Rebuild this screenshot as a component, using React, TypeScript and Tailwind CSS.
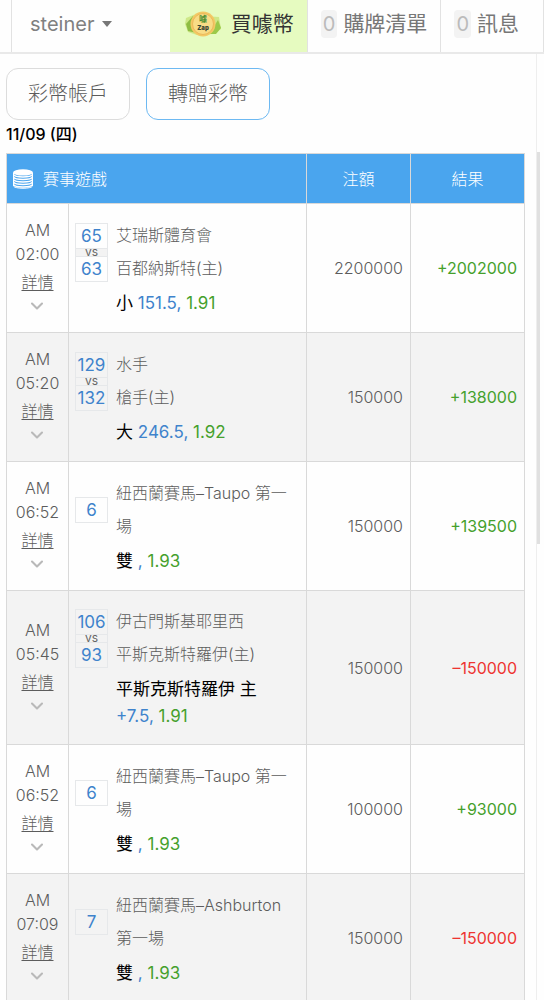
import { ChevronDown } from "lucide-react";

type Bet = {
  time: string;
  scores: string[];
  teams: string[];
  pick: string;
  line?: string;
  odds: string;
  stake: string;
  result: string;
};

const bets: Bet[] = [
  { time: "02:00", scores: ["65", "63"], teams: ["艾瑞斯體育會", "百都納斯特(主)"], pick: "小", line: "151.5", odds: "1.91", stake: "2200000", result: "+2002000" },
  { time: "05:20", scores: ["129", "132"], teams: ["水手", "槍手(主)"], pick: "大", line: "246.5", odds: "1.92", stake: "150000", result: "+138000" },
  { time: "06:52", scores: ["6"], teams: ["紐西蘭賽馬–Taupo 第一場"], pick: "雙", odds: "1.93", stake: "150000", result: "+139500" },
  { time: "05:45", scores: ["106", "93"], teams: ["伊古門斯基耶里西", "平斯克斯特羅伊(主)"], pick: "平斯克斯特羅伊 主", line: "+7.5", odds: "1.91", stake: "150000", result: "–150000" },
  { time: "06:52", scores: ["6"], teams: ["紐西蘭賽馬–Taupo 第一場"], pick: "雙", odds: "1.93", stake: "100000", result: "+93000" },
  { time: "07:09", scores: ["7"], teams: ["紐西蘭賽馬–Ashburton 第一場"], pick: "雙", odds: "1.93", stake: "150000", result: "–150000" },
];

function CoinLogo() {
  return (
    <svg viewBox="0 0 40 30" className="h-[30px] w-10 shrink-0" aria-hidden="true">
      <path d="M3 9 L13 5 L20 7 L36 8 L38 20 L30 25 L14 26 L5 23 L2 15Z" fill="#c3e070" opacity=".7" />
      <path d="M3 15 L10 7 L14 24 L5 22Z" fill="#8ebd42" />
      <path d="M26 25 L35 11 L38 19 L33 25Z" fill="#9cc94a" />
      <circle cx="20" cy="15" r="12.5" fill="#f3c864" />
      <circle cx="20" cy="15" r="10.5" fill="#f8dc86" stroke="#ecb85a" strokeWidth="1" />
      <text x="20" y="13" textAnchor="middle" fontSize="8" fontWeight="700" fill="#4f8f32" fontFamily="Noto Sans CJK TC">噱</text>
      <text x="20" y="21" textAnchor="middle" fontSize="6" fontWeight="900" fill="#3c4a35" fontFamily="Inter">Zap</text>
    </svg>
  );
}

function CoinStack() {
  return (
    <svg viewBox="0 0 20 20" className="h-5 w-5" fill="#fff" aria-hidden="true">
      <ellipse cx="10" cy="3.4" rx="10" ry="3.2" />
      <g fill="none" stroke="#fff" strokeWidth="1.5">
        <path d="M.5 5.5c1 3.2 18 3.2 19 0" />
        <path d="M.5 8c1 3.2 18 3.2 19 0" />
        <path d="M.5 10.5c1 3.2 18 3.2 19 0" />
        <path d="M.5 13c1 3.2 18 3.2 19 0" />
        <path d="M.5 15.5c1 3.2 18 3.2 19 0" />
        <path d="M.5 4v13c1 3 18 3 19 0V4" strokeWidth="1" />
      </g>
    </svg>
  );
}

function Scores({ scores }: { scores: string[] }) {
  return (
    <div className="w-[33px] shrink-0 border border-[#e6e8ea] text-center text-[17px] font-normal text-[#3f83cc]">
      <div className="leading-6">{scores[0]}</div>
      {scores.length > 1 && (
        <>
          <div className="h-[9px] border-y border-[#e6e8ea] bg-[#f3f3f3] text-xs leading-[6px] text-[#666]">vs</div>
          <div className="leading-6">{scores[1]}</div>
        </>
      )}
    </div>
  );
}

function BetRow({ bet }: { bet: Bet }) {
  const win = bet.result.startsWith("+");
  return (
    <tr className="h-[129px] even:bg-[#f3f3f3]">
      <td className="border border-[#d9d9d9] text-center leading-6">
        <div>AM</div>
        <div>{bet.time}</div>
        <button type="button" className="mx-auto mt-1 flex flex-col items-center">
          <span className="underline underline-offset-2">詳情</span>
          <span className="flex h-6 items-center text-[#b9b9b9]">
            <ChevronDown size={20} strokeWidth={2.5} />
          </span>
        </button>
      </td>
      <td className="border border-[#d9d9d9] px-1.5 py-[14px]">
        <div className="flex items-center gap-2">
          <Scores scores={bet.scores} />
          <div className="min-w-0 flex-1 leading-[33px]">
            {bet.teams.map((team) => (
              <div key={team}>{team}</div>
            ))}
          </div>
        </div>
        <div className="mt-[5px] pl-[41px] text-[17px] leading-[27px] font-normal">
          <span className="text-black">{bet.pick}</span>{" "}
          <span className="whitespace-nowrap">
            <span className="text-[#3f83cc]">{bet.line},</span>{" "}
            <span className="text-[#45a02c]">{bet.odds}</span>
          </span>
        </div>
      </td>
      <td className="border border-[#d9d9d9] px-[7px] text-right">{bet.stake}</td>
      <td className={win ? "border border-[#d9d9d9] px-[7px] text-right font-normal text-[#45a02c]" : "border border-[#d9d9d9] px-[7px] text-right font-normal text-[#ee3430]"}>
        {bet.result}
      </td>
    </tr>
  );
}

export default function App() {
  return (
    <div className="flex h-screen flex-col overflow-hidden bg-[#fefefe] font-['Inter','Noto_Sans_CJK_TC',sans-serif] font-light text-[#5c5c5c]">
      <header className="flex h-[54px] shrink-0 border-b-2 border-[#e9e9e9] pl-[11px] text-[21px] font-normal text-[#777]">
        <button type="button" className="flex flex-1 items-center gap-2 border-l border-[#e2e2e2] pb-1 pl-[18px] text-xl text-[#808080]">
          steiner
          <svg viewBox="0 0 10 6" className="h-1.5 w-2.5" fill="#777" aria-hidden="true">
            <path d="M0 0h10L5 6z" />
          </svg>
        </button>
        <a href="#buy" className="flex items-center gap-2 bg-[#e6fbc0] px-[13px] pb-1 text-[#333]">
          <CoinLogo />
          買噱幣
        </a>
        <a href="#cards" className="flex items-center gap-1.5 border-l border-[#e2e2e2] px-[13px] pb-1">
          <span className="rounded-sm bg-[#f3f3f3] px-0.5 text-xl leading-7 text-[#bbb]">0</span>
          購牌清單
        </a>
        <a href="#messages" className="flex items-center gap-1.5 border-x border-[#e2e2e2] pr-6 pb-1 pl-[13px]">
          <span className="rounded-sm bg-[#f3f3f3] px-0.5 text-xl leading-7 text-[#bbb]">0</span>
          訊息
        </a>
      </header>

      <div className="flex min-h-0 flex-1">
        <main className="min-w-0 flex-1 overflow-hidden pt-[14px] pr-[11px] pl-1.5">
          <nav className="flex gap-4 text-xl">
            <button type="button" className="h-[52px] rounded-xl border border-[#dcdcdc] px-[21px]">彩幣帳戶</button>
            <button type="button" className="h-[52px] rounded-xl border border-[#6db9f2] px-[21px]">轉贈彩幣</button>
          </nav>
          <h2 className="mt-0.5 text-base leading-6 font-medium text-black">11/09 (四)</h2>

          <table className="mt-[7px] w-full table-fixed border-collapse text-base">
            <colgroup>
              <col className="w-[62px]" />
              <col />
              <col className="w-[104px]" />
              <col className="w-[114px]" />
            </colgroup>
            <thead>
              <tr className="h-[50px] bg-[#4aa5ee] text-white">
                <th colSpan={2} className="border border-[#d9d9d9] px-1.5 text-left font-light">
                  <span className="flex items-center gap-2.5">
                    <CoinStack />
                    賽事遊戲
                  </span>
                </th>
                <th className="border border-[#d9d9d9] font-light">注額</th>
                <th className="border border-[#d9d9d9] font-light">結果</th>
              </tr>
            </thead>
            <tbody>
              {bets.map((bet, i) => (
                <BetRow key={i} bet={bet} />
              ))}
            </tbody>
          </table>
        </main>
        <div className="w-2 border-l border-[#eeeeee]">
          <div className="mt-[98px] h-[392px] w-[3px] bg-[#e0e0e0]" />
        </div>
      </div>
    </div>
  );
}
